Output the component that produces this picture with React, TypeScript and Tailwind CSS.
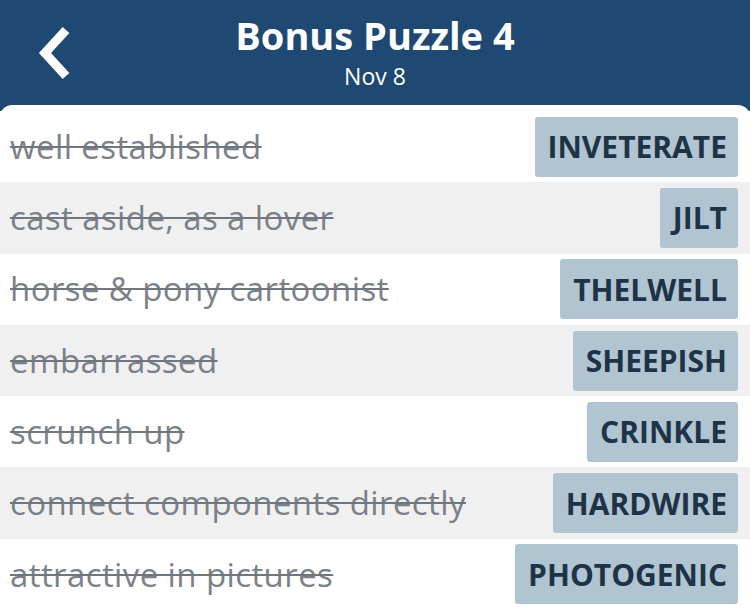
import React from 'react';

type Clue = {
  clue: string;
  answer: string;
};

const clues: Clue[] = [
  { clue: 'well established', answer: 'INVETERATE' },
  { clue: 'cast aside, as a lover', answer: 'JILT' },
  { clue: 'horse & pony cartoonist', answer: 'THELWELL' },
  { clue: 'embarrassed', answer: 'SHEEPISH' },
  { clue: 'scrunch up', answer: 'CRINKLE' },
  { clue: 'connect components directly', answer: 'HARDWIRE' },
  { clue: 'attractive in pictures', answer: 'PHOTOGENIC' },
];

const font = { fontFamily: '"Open Sans", "Noto Sans", sans-serif' };

export default function App() {
  return (
    <div className="w-[750px] h-[611px] overflow-hidden bg-[#1f4872]" style={font}>
      <header className="relative h-[105px] flex flex-col items-center text-white">
        <button className="absolute left-[34px] top-[26px] w-[40px] h-[54px] flex items-center justify-center">
          <svg width="38" height="54" viewBox="0 0 38 54">
            <path
              d="M31 4 L10 27 L31 50"
              fill="none"
              stroke="white"
              strokeWidth="9"
              strokeLinecap="butt"
              strokeLinejoin="miter"
            />
          </svg>
        </button>
        <h1 className="mt-[10px] text-[38px] leading-[50px] font-bold">
          Bonus Puzzle 4
        </h1>
        <div className="mt-[1px] text-[23px] leading-[30px]">Nov 8</div>
      </header>
      <main className="bg-white rounded-t-[12px] pt-[6px] h-[506px]">
        {clues.map((c, i) => (
          <div
            key={c.answer}
            className={`h-[71.3px] flex items-center justify-between pl-[10px] pr-[12px] ${
              i % 2 === 1 ? 'bg-[#f0f0f0]' : 'bg-white'
            }`}
          >
            <span className="text-[33px] tracking-[0.4px] text-[#7b8188] line-through decoration-[2px] decoration-[#6f767d]">
              {c.clue}
            </span>
            <span className="h-[60px] pl-[13px] pr-[11px] flex items-center bg-[#b0c4d1] rounded-[3px] text-[30px] font-bold text-[#1f3346]">
              {c.answer}
            </span>
          </div>
        ))}
      </main>
    </div>
  );
}
